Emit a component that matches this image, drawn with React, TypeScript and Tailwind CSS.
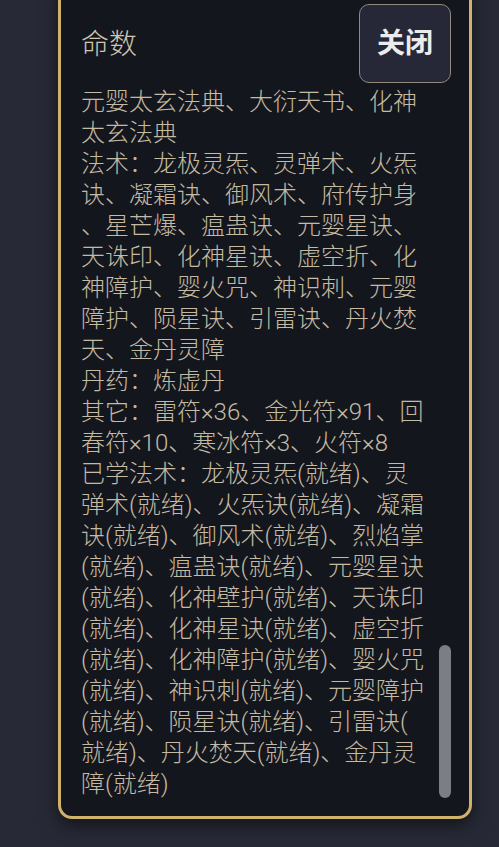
import React from "react";

const lines = [
  "元婴太玄法典、大衍天书、化神太玄法典",
  "法术：龙极灵炁、灵弹术、火炁诀、凝霜诀、御风术、府传护身、星芒爆、瘟蛊诀、元婴星诀、天诛印、化神星诀、虚空折、化神障护、婴火咒、神识刺、元婴障护、陨星诀、引雷诀、丹火焚天、金丹灵障",
  "丹药：炼虚丹",
  "其它：雷符×36、金光符×91、回春符×10、寒冰符×3、火符×8",
  "已学法术：龙极灵炁(就绪)、灵弹术(就绪)、火炁诀(就绪)、凝霜诀(就绪)、御风术(就绪)、烈焰掌(就绪)、瘟蛊诀(就绪)、元婴星诀(就绪)、化神壁护(就绪)、天诛印(就绪)、化神星诀(就绪)、虚空折(就绪)、化神障护(就绪)、婴火咒(就绪)、神识刺(就绪)、元婴障护(就绪)、陨星诀(就绪)、引雷诀(就绪)、丹火焚天(就绪)、金丹灵障(就绪)",
];

export default function App() {
  return (
    <div
      className="min-h-screen h-[847px] overflow-hidden bg-[#272a36]"
      style={{ fontFamily: 'Roboto, "Noto Sans CJK SC", sans-serif' }}
    >
      {/* Detail panel */}
      <div className="ml-[58px] -mt-[14px] w-[414px] h-[833px] flex flex-col rounded-b-[14px] border-[3px] border-[#cfb36b] bg-[#14161e] shadow-[0_6px_18px_rgba(0,0,0,0.55)]">
        <div className="flex items-center justify-between pt-[15px] pl-[20px] pr-[18px]">
          <h2 className="pt-[3px] text-[28px] font-light text-[#cfc7b1] leading-none">命数</h2>
          <button className="w-[92px] h-[79px] rounded-[10px] border-[1.5px] border-[#8f8a7a] bg-[#262838] text-[28px] font-bold text-[#ececec]">
            关闭
          </button>
        </div>

        <div className="relative flex-1 mt-[4px] overflow-hidden">
          <div className="pl-[20px] w-[369px] text-[24px] leading-[31px] font-light text-[#c4bba2] break-all [line-break:anywhere]">
            {lines.map((t, i) => (
              <p key={i}>{t}</p>
            ))}
          </div>
          {/* scrollbar thumb */}
          <div className="absolute right-[18px] bottom-[18px] w-[12px] h-[153px] rounded-full bg-[#7b7e84]" />
        </div>
      </div>
    </div>
  );
}
